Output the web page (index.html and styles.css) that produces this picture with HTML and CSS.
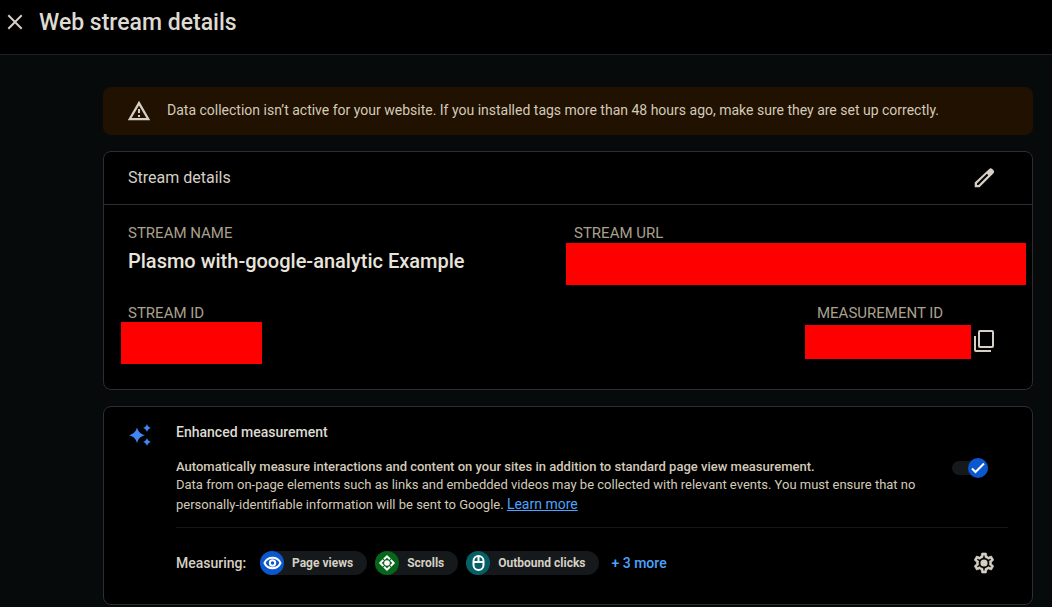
FILE: index.html
```html
<!DOCTYPE html>
<html lang="en">
<head>
<meta charset="utf-8">
<title>Web stream details</title>
<link rel="stylesheet" href="styles.css">
</head>
<body>
<header class="topbar">
  <button class="icon-button close" type="button" aria-label="Close">
    <svg width="24" height="24" viewBox="0 0 24 24"><path d="M19.400 6 18 4.600 12 10.600 6 4.600 4.600 6 10.600 12 4.600 18 6 19.400 12 13.400 18 19.400 19.400 18 13.400 12z"/></svg>
  </button>
  <h1 class="page-title">Web stream details</h1>
</header>
<main class="content">
  <div class="banner" role="alert">
    <svg class="icon" width="24" height="24" viewBox="0 0 24 24"><path fill-rule="evenodd" d="M12 1.800 23.200 21.200H.8L12 1.800zm0 4.600L4.600 19h14.800L12 6.400zM11 16h2v2h-2zM11 10h2v4h-2z"/></svg>
    <p class="banner-text">Data collection isn’t active for your website. If you installed tags more than 48 hours ago, make sure they are set up correctly.</p>
  </div>

  <section class="card">
    <div class="card-header">
      <h2 class="card-title">Stream details</h2>
      <button class="icon-button" type="button" aria-label="Edit stream details">
        <svg width="24" height="24" viewBox="0 0 24 24"><path fill-rule="evenodd" d="M17.200 3a2.200 2.200 0 0 1 3 0l1.300 1.300a2.200 2.200 0 0 1 0 3L7.500 21.300H2.700v-4.800L17.200 3zM5 17.600V19h1.500L16.300 9.200 14.900 7.800z"/></svg>
      </button>
    </div>
    <div class="details">
      <div class="field">
        <span class="label">STREAM NAME</span>
        <span class="name">Plasmo with-google-analytic Example</span>
      </div>
      <div class="field">
        <span class="label">STREAM URL</span>
        <span class="redacted redacted-url"></span>
      </div>
      <div class="field">
        <span class="label">STREAM ID</span>
        <span class="redacted redacted-id"></span>
      </div>
      <div class="field measurement">
        <span class="label measurement-label">MEASUREMENT ID</span>
        <div class="measurement-value">
          <span class="redacted redacted-measurement"></span>
          <button class="icon-button" type="button" aria-label="Copy measurement ID">
            <svg width="24" height="24" viewBox="0 0 24 24"><path fill-rule="evenodd" d="M8 1h12a2 2 0 0 1 2 2v14a2 2 0 0 1-2 2H8a2 2 0 0 1-2-2V3a2 2 0 0 1 2-2zm0 2v14h12V3zM2 7h2v14h15v2H4a2 2 0 0 1-2-2z"/></svg>
          </button>
        </div>
      </div>
    </div>
  </section>

  <section class="card enhanced">
    <svg class="sparkle" width="24" height="24" viewBox="0 0 24 24"><path d="M9 4.500c1.400 4.500 3.200 6.300 8 7.700-4.800 1.400-6.600 3.200-8 7.700-1.400-4.500-3.200-6.300-8-7.700 4.800-1.400 6.600-3.200 8-7.700zM19 1c.8 2.400 1.600 3.200 4 4-2.400.8-3.200 1.600-4 4-.8-2.400-1.600-3.200-4-4 2.400-.8 3.200-1.600 4-4zM19 15c.8 2.400 1.600 3.200 4 4-2.400.8-3.200 1.600-4 4-.8-2.400-1.600-3.200-4-4 2.400-.8 3.200-1.600 4-4z"/></svg>
    <div class="enhanced-body">
      <div class="summary">
        <div class="summary-text">
          <h2 class="enhanced-title">Enhanced measurement</h2>
          <p class="lead">Automatically measure interactions and content on your sites in addition to standard page view measurement.</p>
          <p class="description">Data from on-page elements such as links and embedded videos may be collected with relevant events. You must ensure that no personally-identifiable information will be sent to Google. <a class="link" href="#">Learn more</a></p>
        </div>
        <label class="toggle">
          <input class="toggle-input" type="checkbox" checked aria-label="Enhanced measurement">
          <svg class="toggle-thumb" width="20" height="20" viewBox="0 0 20 20"><circle cx="10" cy="10" r="10"/><path d="M4 10.500 7.500 14 16 5.500"/></svg>
        </label>
      </div>
      <div class="measuring">
        <span class="measuring-label">Measuring:</span>
        <ul class="chips">
          <li class="chip">
            <svg width="24" height="24" viewBox="0 0 24 24"><circle class="blue" cx="12" cy="12" r="12"/><path class="stroke" d="M4.500 12C6 8.600 8.700 6.800 12.500 6.800s6.500 1.800 8 5.200c-1.500 3.400-4.200 5.200-8 5.200S6 15.400 4.500 12z"/><circle class="stroke" cx="12.500" cy="12" r="2.700"/></svg>
            <span>Page views</span>
          </li>
          <li class="chip">
            <svg width="24" height="24" viewBox="0 0 24 24"><circle class="green" cx="12" cy="12" r="12"/><circle class="white" cx="12" cy="12" r="2.800"/><path class="stroke" d="m9 8.300 3-3 3 3M9 15.700l3 3 3-3M8.300 9l-3 3 3 3M15.700 9l3 3-3 3"/></svg>
            <span>Scrolls</span>
          </li>
          <li class="chip">
            <svg width="24" height="24" viewBox="0 0 24 24"><circle class="teal" cx="12" cy="12" r="12"/><rect class="stroke" x="7.500" y="5" width="10" height="14" rx="5"/><path class="stroke" d="M7.500 11h10M12.500 5v6"/></svg>
            <span>Outbound clicks</span>
          </li>
        </ul>
        <a class="more" href="#">+ 3 more</a>
        <button class="icon-button settings" type="button" aria-label="Measurement settings">
          <svg width="24" height="24" viewBox="0 0 24 24"><path d="M19.430 12.980c.04-.32.070-.64.070-.98 0-.34-.03-.66-.07-.98l2.110-1.650c.19-.15.240-.42.120-.64l-2-3.460c-.09-.16-.26-.25-.44-.25-.06 0-.12.010-.17.030l-2.490 1c-.52-.4-1.080-.73-1.690-.98l-.38-2.650C14.460 2.180 14.250 2 14 2h-4c-.25 0-.46.180-.49.420l-.38 2.650c-.61.250-1.170.59-1.690.98l-2.490-1c-.06-.02-.12-.03-.18-.03-.17 0-.34.090-.43.250l-2 3.460c-.13.220-.07.490.12.640l2.110 1.650c-.04.320-.07.650-.07.980 0 .33.030.66.070.98l-2.110 1.650c-.19.150-.24.420-.12.640l2 3.460c.09.160.26.250.44.250.06 0 .12-.01.170-.03l2.490-1c.52.4 1.080.73 1.690.98l.38 2.650c.03.240.24.420.49.420h4c.25 0 .46-.18.490-.42l.38-2.650c.61-.25 1.170-.59 1.690-.98l2.490 1c.06.020.12.030.18.030.17 0 .34-.09.430-.25l2-3.460c.12-.22.070-.49-.12-.64l-2.110-1.650zm-1.980-1.710c.04.310.05.520.05.730 0 .21-.02.430-.05.730l-.14 1.130.89.700 1.080.84-.7 1.210-1.270-.51-1.040-.42-.9.680c-.43.320-.84.560-1.250.73l-1.060.43-.16 1.130-.2 1.350h-1.400l-.19-1.350-.16-1.130-1.060-.43c-.43-.18-.83-.41-1.230-.71l-.91-.7-1.060.43-1.270.51-.7-1.210 1.080-.84.890-.7-.14-1.130c-.03-.31-.05-.54-.05-.74s.02-.43.050-.73l.14-1.130-.89-.7-1.080-.84.7-1.210 1.270.51 1.040.42.900-.68c.43-.32.840-.56 1.250-.73l1.060-.43.160-1.130.2-1.350h1.390l.19 1.350.16 1.130 1.060.43c.43.180.83.410 1.230.71l.91.700 1.060-.43 1.270-.51.700 1.210-1.070.85-.89.700.14 1.130z" stroke-width="0.6"/><circle cx="12" cy="12" r="3.600" stroke="none"/></svg>
        </button>
      </div>
    </div>
  </section>
</main>
</body>
</html>
```
FILE: styles.css
```css
* { box-sizing: border-box; }

body {
  margin: 0;
  background: #060a0b;
  color: #d6d0c4;
  font-family: Roboto, "Liberation Sans", sans-serif;
  font-size: 14px;
}

h1, h2, p, ul { margin: 0; padding: 0; }
svg { display: block; flex: none; }

.topbar {
  display: flex;
  align-items: flex-start;
  gap: 12px;
  height: 55px;
  padding: 10px 3px;
  background: #000;
  border-bottom: 1px solid #1c2021;
}

.icon-button {
  display: grid;
  place-items: center;
  width: 48px;
  height: 32px;
  padding: 0;
  border: 0;
  background: none;
  cursor: pointer;
}

.icon-button svg, .icon { fill: #d6d0c4; }
.settings svg { stroke: #d6d0c4; }
.close { width: 24px; height: 24px; }
.page-title { font-size: 23px; font-weight: 500; line-height: 26px; color: #dedad2; }

.content {
  display: flex;
  flex-direction: column;
  gap: 16px;
  padding: 32px 19px 2px 103px;
}

.banner {
  display: flex;
  align-items: center;
  gap: 16px;
  min-height: 48px;
  padding: 0 24px;
  border-radius: 8px;
  background: #201100;
}

.banner-text { padding-bottom: 2px; line-height: 20px; color: #d3cab9; }

.card {
  border: 1px solid #2b2f30;
  border-radius: 8px;
  background: #000;
}

.card-header {
  display: flex;
  align-items: center;
  justify-content: space-between;
  height: 53px;
  padding: 0 24px;
  border-bottom: 1px solid #2b2f30;
}

.card-title { font-size: 16px; font-weight: 400; line-height: 24px; }

.details {
  display: grid;
  grid-template-columns: 1fr 1fr;
  gap: 18px 12px;
  padding: 18px 24px 25px;
}

.field { display: flex; flex-direction: column; }
.label { font-size: 15px; line-height: 20px; color: #aaa08d; }
.name { font-size: 20px; font-weight: 500; line-height: 36px; color: #e8e4dc; }

.redacted { height: 42px; background: #f00; }
.redacted-url { margin: 0 -18px 0 -8px; }
.redacted-id { width: 141px; margin: -1px 0 0 -7px; }
.redacted-measurement { width: 166px; height: 34px; }

.measurement { justify-self: end; }
.measurement-label { padding-left: 12px; }
.measurement-value { display: flex; align-items: center; padding-top: 2px; }
.measurement-value .icon-button { margin-left: -11px; padding-bottom: 2px; }

.enhanced { display: flex; gap: 24px; padding: 15px 24px 25px; }
.sparkle { margin-top: 1px; fill: #4285f4; }
.enhanced-body { flex: 1; }

.summary {
  display: flex;
  align-items: center;
  justify-content: space-between;
  padding-bottom: 13px;
  border-bottom: 1px solid #141819;
}

.summary-text { max-width: 748px; }
.enhanced-title { margin-bottom: 16px; font-size: 14px; font-weight: 500; line-height: 20px; color: #dedad2; }
.lead, .description { font-size: 13px; line-height: 18px; color: #d3cab9; }
.lead { font-weight: 500; }
.link { display: inline-block; font-size: 14px; line-height: 20px; color: #4da3ff; }

.toggle { display: grid; align-items: center; width: 36px; margin-right: 20px; cursor: pointer; }
.toggle-input, .toggle-thumb { grid-area: 1 / 1; }
.toggle-input { appearance: none; width: 36px; height: 14px; margin: 0; border-radius: 7px; background: #15191b; }
.toggle-thumb { justify-self: end; }
.toggle-thumb circle { fill: #0b57d0; }
.toggle-thumb path { fill: none; stroke: #fff; stroke-width: 2; }

.measuring { display: flex; align-items: center; gap: 12px; padding-top: 19px; }
.measuring-label { min-width: 72px; font-weight: 500; line-height: 20px; }
.chips { display: flex; gap: 8px; list-style: none; }

.chip {
  display: flex;
  align-items: center;
  gap: 8px;
  padding-right: 14px;
  border-radius: 12px;
  background: #15191b;
  font-size: 12px;
  font-weight: 700;
  line-height: 24px;
}

.blue { fill: #0b57d0; }
.green { fill: #06661a; }
.teal { fill: #056066; }
.white { fill: #fff; }
.stroke { fill: none; stroke: #fff; stroke-width: 2; }

.more { font-weight: 500; color: #4da3ff; text-decoration: none; }
.settings { margin-left: auto; }
```
